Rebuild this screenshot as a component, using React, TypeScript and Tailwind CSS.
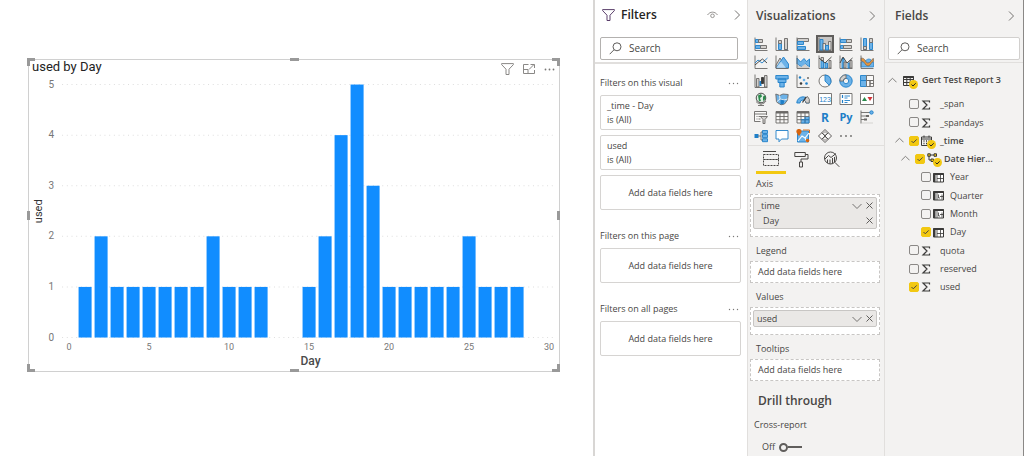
import React from "react";
import clsx from "clsx";

const DATA = [
  [1, 1], [2, 2], [3, 1], [4, 1], [5, 1], [6, 1], [7, 1], [8, 1], [9, 2], [10, 1], [11, 1], [12, 1],
  [15, 1], [16, 2], [17, 4], [18, 5], [19, 3], [20, 1], [21, 1], [22, 1], [23, 1], [24, 1], [25, 2],
  [26, 1], [27, 1], [28, 1],
];

const G = "#6b6967";
const B = "#6cb2e8";
const D = "#1f7fc8";
const L = "#d2d0ce";

const Chevron = ({ dir = "right", size = 10 }: { dir?: "right" | "up" | "down"; size?: number }) => {
  const d = { right: "M3 .5 7.5 5 3 9.5", up: "M.5 7 5 2.5 9.5 7", down: "M.5 3 5 7.5 9.5 3" }[dir];
  return (
    <svg width={size} height={size} viewBox="0 0 10 10" fill="none" stroke="#757371" strokeWidth="1" aria-hidden>
      <path d={d} />
    </svg>
  );
};

const Close = () => (
  <svg width="7" height="7" viewBox="0 0 7 7" stroke="#605e5c" strokeWidth="1" aria-hidden>
    <path d="M.5.5l6 6M6.5.5l-6 6" />
  </svg>
);

const Dots = ({ r = 0.7 }: { r?: number }) => (
  <svg width="11" height="3" viewBox="0 0 11 3" fill="#7a7876" aria-hidden>
    <circle cx="1.5" cy="1.5" r={r} />
    <circle cx="5.5" cy="1.5" r={r} />
    <circle cx="9.5" cy="1.5" r={r} />
  </svg>
);

const Funnel = ({ color = "#605e5c" }: { color?: string }) => (
  <svg width="13" height="12" viewBox="0 0 13 12" fill="none" stroke={color} strokeWidth="1" aria-hidden>
    <path d="M.6.6h11.8v1L8 6.2v5.3H5V6.2L.6 1.6z" />
  </svg>
);

const SearchIcon = () => (
  <svg className="shrink-0" width="13" height="13" viewBox="0 0 13 13" fill="none" stroke="#605e5c" strokeWidth="1" aria-hidden>
    <circle cx="8" cy="4.8" r="4" />
    <path d="M5.1 7.7.7 12.2" />
  </svg>
);

// Visual gallery, one 14x14 drawing per entry
const axis = <path d="M1 .5v13h12.5" stroke={G} fill="none" />;
const VISUALS: [string, React.ReactNode][] = [
  ["Stacked bar chart", <>{axis}<path d="M1.5 2.5h3v3h-3zM1.5 8.5h5v3h-5z" fill={B} stroke={D} /><path d="M4.5 2.5h4v3h-4zM6.5 8.5h6v3h-6z" fill={L} stroke={G} /></>],
  ["Stacked column chart", <>{axis}<path d="M3.5 6.5h3v6h-3zM9.5 6.5h3v6h-3z" fill={B} stroke={D} /><path d="M3.5 3.5h3v3h-3zM9.5 1.5h3v11h-3z" fill={L} stroke={G} /></>],
  ["Clustered bar chart", <>{axis}<path d="M1.5 1.5h11v3h-11z" fill={L} stroke={G} /><path d="M1.5 4.5h6v3h-6z" fill={B} stroke={D} /><path d="M1.5 9.5h8v3h-8z" fill={B} stroke={D} /></>],
  ["Clustered column chart", <>{axis}<path d="M2 2.5h3v10.5H2z" fill={B} stroke={D} /><path d="M5 6.5h2.5v6.5H5zM10.5 4.5h2.5v8.5h-2.5z" fill="#e8e6e4" stroke={G} /><path d="M7.5 8.5H10.5V13H7.5z" fill={B} stroke={D} /></>],
  ["100% stacked bar chart", <>{axis}<path d="M1.5 2.5h6v3h-6zM1.5 8.5h3v3h-3z" fill={B} stroke={D} /><path d="M7.5 2.5h5v3h-5zM4.5 8.5h8v3h-8z" fill={L} stroke={G} /></>],
  ["100% stacked column chart", <>{axis}<path d="M3.5 1.5h3v11h-3zM9.5 5.5h3v7h-3z" fill={B} stroke={D} /><path d="M9.5 1.5h3v4h-3zM3.5 9.5h3v3h-3z" fill={L} stroke={G} /></>],
  ["Line chart", <>{axis}<path d="M1 8l3-3 4 3 5.5-5" fill="none" stroke={D} /><path d="M1 10l4-3.5L8.5 4l4.5 4" fill="none" stroke="#3b3a39" /></>],
  ["Area chart", <><path d="M1 10l4-7 6 10H1z" fill={L} stroke={G} /><path d="M1 13L8.5 2l5 7v4z" fill={B} stroke={D} /><path d="M3.5 9.5L6 6.500l5 6.500H1z" fill="#fff" fillOpacity=".5" />{axis}</>],
  ["Stacked area chart", <><path d="M1 3l3.5 4L8 3.5l2.5 3L13.5 4v8L9.5 9 6 12 1 9z" fill={B} stroke={D} /><path d="M1 9l4 3 4-3 4 3v1H1z" fill={L} />{axis}</>],
  ["Line and stacked column chart", <>{axis}<path d="M3 5.5h2.5v7.5H3zM7 8h2.5v5H7z" fill={B} stroke={D} /><path d="M3 2.5h2.5v3H3zM11 5.5h2V13h-2z" fill={L} stroke={G} /><path d="M1 3l6 5 6.5-6" fill="none" stroke="#3b3a39" /></>],
  ["Line and clustered column chart", <>{axis}<path d="M3 3.5h2V13H3zM9 8h2v5H9z" fill={B} stroke={D} /><path d="M5 7h2v6H5zM11 5.5h2V13h-2z" fill={L} stroke={G} /><path d="M1 8l3-6 4 6 5.5-5" fill="none" stroke="#3b3a39" /></>],
  ["Ribbon chart", <><path d="M1 7c5 0 5-3 8-3s2 3 4.5 3v5H1z" fill={B} stroke={D} strokeWidth=".7" /><path d="M1 3c5 0 4 5 7 5s3-4 5.500-4.500v3c-2.500 0-2.500 4.500-5.500 4.500S5 6 1 6z" fill="#e8963c" stroke="#5f5d5b" strokeWidth=".6" />{axis}</>],
  ["Waterfall chart", <>{axis}<path d="M2.5 4.5H5V13H2.5z" fill={L} stroke={G} /><path d="M5.5 7h2v5h-2z" fill={D} /><path d="M7.5 3.5h2v6h-2z" fill="#3b3a39" stroke="#3b3a39" /><path d="M10.5 1.5H13V13h-2.500z" fill={L} stroke={G} /></>],
  ["Funnel chart", <path d="M.8 1.500h12.400v3.500H.8zM3 5h8v3.500H3zM4.800 8.500h4.400v4.500H4.800z" fill={B} stroke={D} />],
  ["Scatter chart", <>{axis}<circle cx="4" cy="3.5" r="1.2" fill={D} /><circle cx="8" cy="6" r="1.3" fill={B} /><circle cx="12" cy="4" r="1" fill={G} /><circle cx="5" cy="9.5" r="1.3" fill="#3b3a39" /><circle cx="10.5" cy="9.5" r="1.3" fill={D} /></>],
  ["Pie chart", <><circle cx="7" cy="7" r="6" fill="#faf9f8" stroke={G} /><path d="M7 7V1a6 6 0 0 1 4.2 10.3z" fill={B} stroke={D} /></>],
  ["Donut chart", <><circle cx="7" cy="7" r="4.5" fill="none" stroke={B} strokeWidth="3.5" /><circle cx="7" cy="7" r="6.2" fill="none" stroke={D} /><circle cx="7" cy="7" r="2.7" fill="none" stroke={D} /><path d="M7 .8A6.2 6.2 0 0 0 .8 7h3.5A2.7 2.7 0 0 1 7 4.3z" fill={L} stroke={G} /></>],
  ["Treemap", <><path d="M.5 1.5h6v5h-6zM.5 6.5h6v6h-6z" fill={B} stroke={D} /><path d="M6.5 1.5h7v5h-7zM6.5 6.5h3.5v6H6.5zM10 6.5h3.5v6H10zM10 9.5h3.5" fill="#faf9f8" stroke={G} /></>],
  ["Map", <><circle cx="7" cy="6" r="4.8" fill="#dfeee4" stroke="#3b3a39" /><path d="M4 3.5l3-1.5 1 2.5-2 1.5 1 3-2 .5zM9 4.500l2.500-1v3.500L9 9z" fill="#2b8a4b" /><path d="M2 9.500c3 3.500 8 3 10-.5M7 12v1.500M4 13.500h6" stroke={G} fill="none" /></>],
  ["Filled map", <><path d="M.8 2l4 1.5L8 2l5.2.5-.7 5.5L9.5 12 6 12.8 1.5 10z" fill={B} stroke={G} /><path d="M4.5 3.5L5 7l4 1 3.5-1M5 7l-3.500 3" stroke="#f3f2f1" fill="none" /><path d="M5.5 7.5l4 1-1 3.5-3 .5z" fill={D} /></>],
  ["Gauge", <><path d="M.8 11a6.2 6.2 0 0 1 12.4 0H10a3 3 0 0 0-6 0z" fill={B} stroke={D} /><path d="M10 5.500l1.500-1A6.200 6.200 0 0 1 13.200 11H10a3 3 0 0 0-1.500-2.600z" fill={L} stroke={G} /><path d="M6.5 10.5L10 5" stroke="#3b3a39" strokeWidth="1.2" /></>],
  ["Card", <><path d="M.5 1.500h13v11h-13z" fill="#fff" stroke={G} /><text x="7" y="9.5" fontSize="7" fontFamily="Liberation Sans" fill={D} textAnchor="middle">123</text></>],
  ["Multi-row card", <><path d="M1 1.500h12v11H1z" fill="#fff" stroke={G} /><path d="M3.5 3v3M3.5 8v3" stroke={D} strokeWidth="1.2" /><path d="M5.5 4h5.5M5.5 6h3M5.5 8.5h5.5M5.5 10.5h3" stroke={D} /></>],
  ["KPI", <><path d="M.5 1.500h13v11h-13z" fill="#fff" stroke={G} /><path d="M2 9l2.5-4L7 9z" fill="#2b8a4b" /><path d="M7.5 5h5L10 9z" fill="#d13438" /></>],
  ["Slicer", <><path d="M12.5 5V1.5H.5v10h6" fill="#faf9f8" stroke={G} /><path d="M.5 4h12M2.5 6.5h1M2.5 9h1M4.5 6.5h3M4.5 9h2" stroke={G} /><path d="M6.5 6.5h7L11 9.5v4H9v-4z" fill={L} stroke={G} /></>],
  ["Table", <><path d="M1 1.500h12V13H1z" fill="#faf9f8" stroke={G} /><path d="M1 2.5h12" stroke={G} strokeWidth="2" /><path d="M1 6.5h12M1 9.7h12M5 3v10M9 3v10" stroke={G} /></>],
  ["Matrix", <><path d="M1 1.500h12V13H1z" fill="#faf9f8" stroke={G} /><path d="M5 9.5h4V6.5h4V13H5z" fill={B} /><path d="M1 2.5h12" stroke={G} strokeWidth="2" /><path d="M1 6.5h12M1 9.7h12M5 3v10M9 3v10" stroke={G} /><path d="M5 9.7h8M9 6.5V13M5 13h8V6.5" stroke={D} fill="none" /></>],
  ["R script visual", <text x="7" y="11.5" fontSize="12" fontWeight="700" fontFamily="Open Sans" fill={D} textAnchor="middle">R</text>],
  ["Python visual", <text x="7" y="10.5" fontSize="11" fontWeight="700" fontFamily="Open Sans" fill={D} textAnchor="middle">Py</text>],
  ["Key influencers", <><path d="M1 .5v13" stroke={G} /><path d="M1 2.5h9M1 6h6M1 9.5h4" stroke={G} /><circle cx="11.5" cy="2.5" r="1.7" fill={B} stroke={D} /><path d="M6 5h3v2H6zM4 8.500h3v2H4z" fill={G} /><path d="M2 13h11" stroke={L} /></>],
  ["Decomposition tree", <><path d="M.5 5h4v4h-4z" fill={D} /><path d="M4 7h3M9 3H7v8h2" stroke={G} fill="none" /><path d="M8.5 1.5h5v3h-5zM8.5 5.6h5v3h-5zM8.5 9.7h5v3h-5z" fill={B} stroke={D} /></>],
  ["Q&A", <path d="M1 1.5h12V10H6.500L4 12.8V10H1z" fill="#fff" stroke={D} />],
  ["ArcGIS Maps", <><path d="M1.500 2h11v11h-11z" fill={B} stroke={D} /><path d="M2 12l4-5 3 2 4-5M9 9l2 4" stroke="#fff" fill="none" strokeWidth="1.2" /><path d="M3 7C1 4.5.3 3.500.3 2.600a2.600 2.600 0 0 1 5.300 0C5.600 3.5 5 4.5 3 7z" fill="#d8640c" /><path d="M7 1h6.500v3" stroke="#d8640c" fill="none" /><circle cx="11.5" cy="11.5" r="1.8" fill="#d8640c" /></>],
  ["Power Apps", <><path d="M7 .5L13.5 7 7 13.5.5 7z" fill="#faf9f8" stroke="#4a4846" /><path d="M3.7 3.7l6.6 6.6M10.3 3.7l-6.6 6.6" stroke="#4a4846" /><path d="M7 2.5L9 4.5 7 6.5 5 4.5zM7 7.5l2 2-2 2-2-2z" fill="none" stroke="#4a4846" strokeWidth=".7" /></>],
  ["More visuals", <><circle cx="2" cy="7" r=".9" fill={G} /><circle cx="7" cy="7" r=".9" fill={G} /><circle cx="12" cy="7" r=".9" fill={G} /></>],
];

const x = (day: number) => 41 + day * 15.97;
const y = (v: number) => 278 - v * 50.5;

const Chart = () => (
  <svg className="block w-full" viewBox="0 0 531 312" role="img" aria-label="used by Day" fontFamily="Roboto, sans-serif">
    {[0, 1, 2, 3, 4, 5].map((v) => (
      <g key={v}>
        <line x1="34" x2="525" y1={y(v)} y2={y(v)} stroke="#dedede" strokeDasharray="1 3.7" />
        <text x="26" y={y(v) + 3} fontSize="10" fill="#777" textAnchor="end">{v}</text>
      </g>
    ))}
    {[0, 5, 10, 15, 20, 25, 30].map((d) => (
      <text key={d} x={x(d)} y="290" fontSize="9" fill="#777" textAnchor="middle">{d}</text>
    ))}
    {DATA.map(([d, v]) => (
      <rect key={d} x={x(d) - 6.5} y={y(v)} width="13" height={y(0) - y(v)} fill="#118dff" />
    ))}
    <text x="282" y="305" fontSize="12" fontWeight="500" fill="#4a4a4a" textAnchor="middle">Day</text>
    <text transform="translate(14 152) rotate(-90)" fontSize="11" fill="#333" textAnchor="middle">used</text>
  </svg>
);

const HANDLES = [
  "-left-px -top-px h-2 w-2 border-l-3 border-t-3",
  "right-0 -top-px h-2 w-2 border-r-3 border-t-3",
  "-left-px bottom-0 h-2 w-2 border-l-3 border-b-3",
  "right-0 bottom-0 h-2 w-2 border-r-3 border-b-3",
  "left-1/2 -top-px -ml-1 w-[9px] border-t-3",
  "left-1/2 bottom-0 -ml-1 w-[9px] border-t-3",
  "top-1/2 -left-px -mt-1 h-[9px] border-l-3",
  "top-1/2 right-0 -mt-1 h-[9px] border-l-3",
];

const Visual = () => (
  <main className="min-w-0 flex-1 pt-[59px] pl-7 pr-[33px]">
    <div className="relative outline -outline-offset-1 outline-[#d0d0d0]">
      <Chart />
      <h2 className="absolute left-1 top-0 text-[13px] leading-4 text-[#222] font-[Roboto]">used by Day</h2>
      <div className="absolute right-1 top-1 flex h-3 items-center gap-[9px]">
        <button aria-label="Filters"><Funnel color="#8a8886" /></button>
        <button aria-label="Focus mode">
          <svg width="12" height="10" viewBox="0 0 12 10" fill="none" stroke="#8a8886">
            <path d="M5.5.5h-5v9h11V6M.5 5.5h4.500v4M6 5.500l5-5M7.5.5h4V4" />
          </svg>
        </button>
        <button aria-label="More options" className="w-3"><Dots r={0.9} /></button>
      </div>
      {HANDLES.map((h) => (
        <span key={h} className={clsx("absolute border-[#999]", h)} />
      ))}
    </div>
  </main>
);

const SearchBox = ({ id, className }: { id: string; className: string }) => (
  <label htmlFor={id} className={clsx("flex h-[23px] items-center gap-[7px] rounded-[2px] border bg-white px-2", className)}>
    <SearchIcon />
    <input id={id} type="search" placeholder="Search" aria-label="Search" className="w-full min-w-0 bg-transparent text-[10px] outline-none placeholder:text-[#484644]" />
  </label>
);

const FilterSection = ({ title, cards = [] }: { title: string; cards?: string[] }) => (
  <section className="flex flex-col gap-[5px]">
    <div className="flex h-3.5 items-center justify-between pr-0.5">
      <h3>{title}</h3>
      <button aria-label={`${title} options`}><Dots /></button>
    </div>
    {cards.map((c) => (
      <div key={c} className="h-[35px] rounded-[2px] border border-[#d6d4d2] px-1.5 py-[3px] leading-[14px]">
        <p>{c}</p>
        <p>is (All)</p>
      </div>
    ))}
    <div className="flex h-[35px] items-center justify-center rounded-[2px] border border-[#d6d4d2]">Add data fields here</div>
  </section>
);

const Filters = () => (
  <aside className="w-[154px] shrink-0 border-l-2 border-[#d8d6d4] bg-white">
    <header className="flex h-[64px] flex-col border-b-2 border-[#e1dfdd] pl-[5px] pr-[9px]">
      <div className="flex h-[37px] items-center pb-2 pl-0.5">
        <Funnel color="#5b3f6b" />
        <h2 className="ml-1.5 flex-1 text-[12px] font-semibold text-[#252423]">Filters</h2>
        <button aria-label="Hide filters" className="mr-3.5">
          <svg width="11" height="8" viewBox="0 0 11 8" fill="none" stroke="#8a8886" strokeWidth=".9">
            <path d="M.5 4C3 .2 8 .2 10.5 4" />
            <circle cx="5.5" cy="4.8" r="1.8" />
          </svg>
        </button>
        <button aria-label="Collapse filters" className="-mr-1"><Chevron /></button>
      </div>
      <SearchBox id="filter-search" className="border-[#b3b1af]" />
    </header>
    <div className="flex flex-col gap-[19px] pl-[5px] pr-1.5 pt-3 text-[9px] text-[#484644]">
      <FilterSection title="Filters on this visual" cards={["_time - Day", "used"]} />
      <FilterSection title="Filters on this page" />
      <FilterSection title="Filters on all pages" />
    </div>
  </aside>
);

const Pill = ({ name, menu = true, indent = false }: { name: string; menu?: boolean; indent?: boolean }) => (
  <div className="flex h-[15px] items-center gap-1 pr-[3px]">
    <span className={clsx("flex-1", indent ? "pl-[9px]" : "pl-[3px]")}>{name}</span>
    {menu && <button aria-label={`${name} menu`}><Chevron dir="down" /></button>}
    <button aria-label={`Remove ${name}`}><Close /></button>
  </div>
);

const Well = ({ title, children }: { title: string; children?: React.ReactNode }) => (
  <section>
    <h3 className="pl-1.5 leading-5">{title}</h3>
    <div className="border border-dashed border-[#c8c6c4] bg-white">
      {children ? (
        <div className="mx-0.5 mt-0.5 mb-[7px] rounded-[2px] border border-[#c8c6c4] bg-[#eae8e6]">{children}</div>
      ) : (
        <p className="pl-[7px] leading-5">Add data fields here</p>
      )}
    </div>
  </section>
);

const Visualizations = () => (
  <aside className="w-[137px] shrink-0 border-l border-[#e1dfdd] bg-[#f3f2f1] text-[9px] text-[#484644]">
    <header className="flex h-[35px] items-center justify-between pb-1 pl-2 pr-[7px]">
      <h2 className="text-[12px] font-semibold text-[#484644]">Visualizations</h2>
      <button aria-label="Collapse visualizations"><Chevron /></button>
    </header>
    <div className="grid h-[110px] grid-cols-6 grid-rows-6 pl-0.5 pr-1.5">
      {VISUALS.map(([name, art]) => (
        <button
          key={name}
          title={name}
          aria-label={name}
          className={clsx(
            "flex size-[18px] items-center justify-center place-self-center",
            name === "Clustered column chart" && "border-2 border-[#605e5c] bg-[#c8c6c4]"
          )}
        >
          <svg className="shrink-0" width="14" height="14" viewBox="0 0 14 14" strokeWidth=".9">{art}</svg>
        </button>
      ))}
    </div>
    <div className="flex border-t border-[#e1dfdd] pl-2" role="tablist">
      <button role="tab" aria-selected="true" aria-label="Fields" className="flex h-7 w-[30px] items-center justify-center border-b-3 border-[#f2c811]">
        <svg width="16" height="16" viewBox="0 0 16 16" fill="none" stroke="#484644">
          <path d="M0 .5h13" />
          <path d="M.5 3.5h15v5H.5zM.5 8.5h15v6H.5z" strokeDasharray="2 1" />
        </svg>
      </button>
      <button role="tab" aria-selected="false" aria-label="Format" className="flex h-7 w-[30px] items-center justify-center pb-0.5">
        <svg width="15" height="17" viewBox="0 0 15 17" fill="none" stroke="#484644">
          <path d="M.8 1.500h10.500v4H.8zM11.300 3.500H14V8H7v3M5.500 11h3v5h-3z" />
        </svg>
      </button>
      <button role="tab" aria-selected="false" aria-label="Analytics" className="flex h-7 w-[30px] items-center justify-center pb-0.5">
        <svg width="17" height="17" viewBox="0 0 17 17" fill="none" stroke="#484644">
          <circle cx="7.5" cy="7" r="6" />
          <path d="M11.8 11.3l4.500 4.500M2 8l3.500-3.500L8 6.500l5-4M4.500 12V8.500M7 13V8.500M9.500 12.500V7M11.500 11V6" />
        </svg>
      </button>
    </div>
    <div className="flex flex-col gap-1 pl-0.5 pr-1">
      <Well title="Axis">
        <Pill name="_time" />
        <Pill name="Day" menu={false} indent />
      </Well>
      <Well title="Legend" />
      <Well title="Values">
        <Pill name="used" />
      </Well>
      <Well title="Tooltips" />
    </div>
    <h2 className="pl-2.5 pt-3 text-[12px] leading-4 font-semibold">Drill through</h2>
    <h3 className="pl-1.5 pt-2 leading-4">Cross-report</h3>
    <label className="flex items-center gap-1 pl-3.5 pt-1.5 leading-4">
      Off
      <input type="checkbox" role="switch" className="peer sr-only" />
      <span className="flex items-center">
        <span className="size-[9px] rounded-full border-2 border-[#605e5c]" />
        <span className="h-0.5 w-3.5 bg-[#605e5c]" />
      </span>
    </label>
  </aside>
);

const Badge = () => (
  <svg className="absolute -bottom-[3px] -right-1" width="9" height="9" viewBox="0 0 9 9" fill="none" aria-hidden>
    <circle cx="4.5" cy="4.5" r="4.5" fill="#f2c811" />
    <path d="M2.5 4.5L4 6l2.700-2.700" stroke="#252423" />
  </svg>
);

const FIELD_ICONS = {
  sum: <path d="M8.5 3.500V2H2l4 4-4 4h6.500V8.500" strokeWidth="1.2" />,
  table: <><path d="M.5 1.500h10v9H.5zM.5 4.500h10M.5 7.500h10M3.800 2v8.500M7.200 2v8.500" /><path d="M.5 2h10" strokeWidth="2" /></>,
  date: <><path d="M.5 2h10v8.500H.5zM.5 4h10M3 .5v2M8 .5v2" /><path d="M2.500 6h1M5 6h1M7.500 6h1M2.500 8.500h1M5 8.500h1" strokeWidth="1.300" /></>,
  tree: <><path d="M.8.8h2.500v2.500H.8zM7 .8h2.500v2.500H7zM4 6h2.500v2.500H4z" fill="#f2c811" /><path d="M3.300 2H7M2 3.500V7h2" /></>,
  level: <><path d="M.5 1.500h10v8.500H.5z" fill="#fff" /><path d="M4 3v7M7.500 3v7M4 6.500h6.500" strokeWidth=".8" /><path d="M.5 2h10M1.500 2v8" strokeWidth="2" /></>,
  column: <><path d="M.5 1.500h10v8.500H.5z" fill="#fff" /><path d="M4 3v7M5.500 4.500v3.500H7M9 4.500v5M7 6.500h3" strokeWidth=".8" /><path d="M.5 2h10M1.500 2v8" strokeWidth="2" /></>,
};

type Field = { name: string; icon: keyof typeof FIELD_ICONS; level: 0 | 1 | 2; checked?: boolean; open?: boolean };

const FIELDS: Field[] = [
  { name: "_span", icon: "sum", level: 0 },
  { name: "_spandays", icon: "sum", level: 0 },
  { name: "_time", icon: "date", level: 0, checked: true, open: true },
  { name: "Date Hier...", icon: "tree", level: 1, checked: true, open: true },
  { name: "Year", icon: "level", level: 2 },
  { name: "Quarter", icon: "column", level: 2 },
  { name: "Month", icon: "column", level: 2 },
  { name: "Day", icon: "level", level: 2, checked: true },
  { name: "quota", icon: "sum", level: 0 },
  { name: "reserved", icon: "sum", level: 0 },
  { name: "used", icon: "sum", level: 0, checked: true },
];

const INDENT = ["pl-2", "pl-3.5", "pl-5"];

const FieldIcon = ({ icon, badge }: { icon: keyof typeof FIELD_ICONS; badge?: boolean }) => (
  <span className="relative shrink-0">
    <svg width="11" height="11" viewBox="0 0 11 11" fill="none" stroke="#3b3a39">{FIELD_ICONS[icon]}</svg>
    {badge && <Badge />}
  </span>
);

const FieldRow = ({ name, icon, level, checked, open }: Field) => (
  <li className={clsx("flex items-center", INDENT[level])}>
    <span className="flex w-4 shrink-0 items-center pl-0.5">
      {open && <button aria-label={`Collapse ${name}`}><Chevron dir="up" size={9} /></button>}
    </span>
    <label className="flex items-center">
      <span className="relative mr-0.5 flex shrink-0">
        <input type="checkbox" defaultChecked={checked} className="peer size-2.5 appearance-none rounded-[2px] border border-[#8a8886] checked:border-[#f2c811] checked:bg-[#f2c811]" />
        <svg className="pointer-events-none absolute inset-0 hidden peer-checked:block" width="10" height="10" viewBox="0 0 10 10" fill="none" stroke="#484644">
          <path d="M2.5 5L4.300 6.800 7.700 3.400" />
        </svg>
      </span>
      <FieldIcon icon={icon} badge={open} />
      <span className={clsx("whitespace-nowrap", level ? "ml-1.5" : "ml-2", open && "font-semibold")}>{name}</span>
    </label>
  </li>
);

const Fields = () => (
  <aside className="w-[140px] shrink-0 border-l border-r border-l-[#e1dfdd] border-r-[#8a8886] bg-[#f3f2f1] text-[9px] text-[#484644]">
    <header className="flex h-[63px] flex-col border-b border-[#e1dfdd] px-[3px]">
      <div className="flex h-[37px] items-center justify-between pb-1.5 pl-[7px] pr-1">
        <h2 className="text-[12px] font-semibold">Fields</h2>
        <button aria-label="Collapse fields"><Chevron /></button>
      </div>
      <SearchBox id="field-search" className="border-[#d2d0ce]" />
    </header>
    <div className="flex h-8 items-center pt-0.5 pl-[3px]">
      <button aria-label="Collapse Gert Test Report 3"><Chevron dir="up" size={9} /></button>
      <span className="ml-1.5 flex"><FieldIcon icon="table" badge /></span>
      <span className="ml-2 whitespace-nowrap font-semibold">Gert Test Report 3</span>
    </div>
    <ul className="grid h-[201px] auto-rows-fr">
      {FIELDS.map((f) => <FieldRow key={f.name} {...f} />)}
    </ul>
  </aside>
);

export default function App() {
  return (
    <div className="flex min-h-screen bg-white font-['Open_Sans',sans-serif]">
      <Visual />
      <Filters />
      <Visualizations />
      <Fields />
    </div>
  );
}
